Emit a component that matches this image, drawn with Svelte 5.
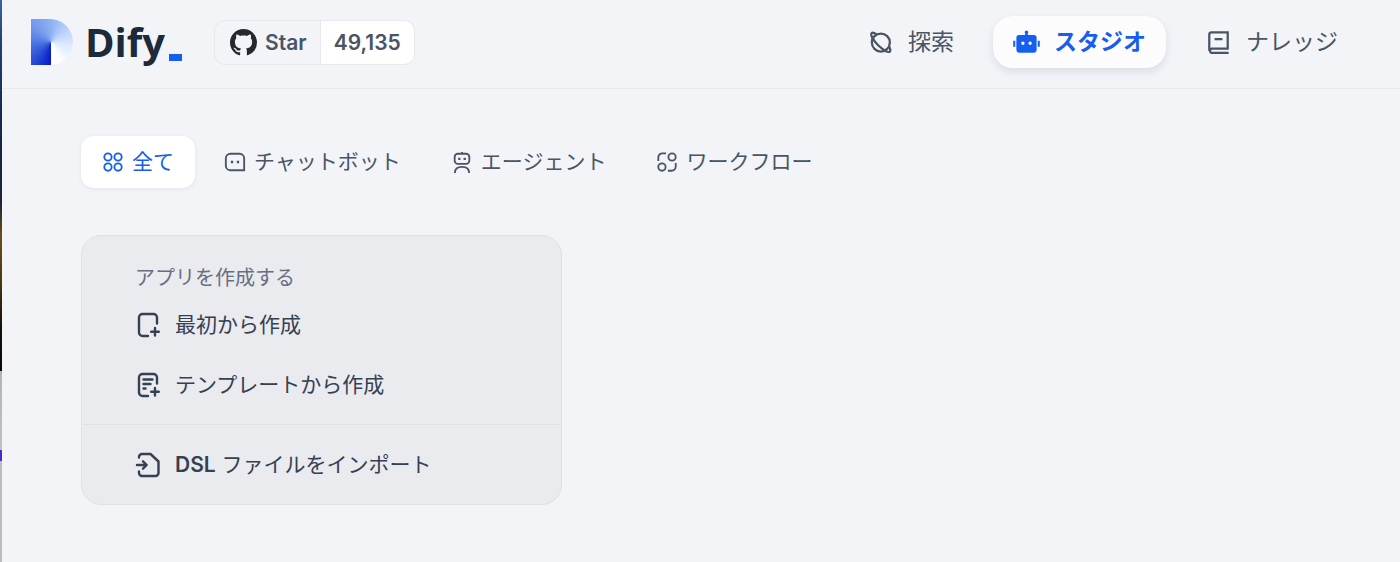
<script lang="ts">
	type IconName =
		| 'planet'
		| 'robot'
		| 'book'
		| 'apps'
		| 'message'
		| 'agent'
		| 'workflow'
		| 'file'
		| 'template'
		| 'import';

	interface Item {
		label: string;
		icon: IconName;
	}

	const navItems: Item[] = [
		{ label: '探索', icon: 'planet' },
		{ label: 'スタジオ', icon: 'robot' },
		{ label: 'ナレッジ', icon: 'book' }
	];

	const tabs: Item[] = [
		{ label: '全て', icon: 'apps' },
		{ label: 'チャットボット', icon: 'message' },
		{ label: 'エージェント', icon: 'agent' },
		{ label: 'ワークフロー', icon: 'workflow' }
	];

	const createItems: Item[] = [
		{ label: '最初から作成', icon: 'file' },
		{ label: 'テンプレートから作成', icon: 'template' }
	];

	let activeNav = $state('スタジオ');
	let activeTab = $state('全て');
</script>

{#snippet icon(name: IconName)}
	<svg class="icon" viewBox="0 0 24 24" fill="none" stroke="currentColor" stroke-width="2" aria-hidden="true">
		{#if name === 'planet'}
			<circle cx="12.3" cy="12" r="8" />
			<path
				d="M8.5 4.9C6.4 3.3 4.8 2.9 4.1 3.7C2.8 5.1 5.5 10 9.7 14.3C13.9 18.5 18.8 21.4 20.3 20.1C21.2 19.2 20.8 17.7 19.5 15.5M4.1 3.7C3.4 4.5 3.9 6.5 5.4 8.9"
				stroke-linejoin="round"
			/>
		{:else if name === 'robot'}
			<path
				fill="currentColor"
				stroke="none"
				fill-rule="evenodd"
				d="M10.8 5.3V3.8A1.5 1.5 0 1 1 13.2 3.8V5.3H18.5A2.5 2.5 0 0 1 21 7.8V18.5A2.5 2.5 0 0 1 18.5 21H5.5A2.5 2.5 0 0 1 3 18.5V7.8A2.5 2.5 0 0 1 5.5 5.3ZM8.8 11.2A1.5 1.5 0 1 0 8.8 14.2A1.5 1.5 0 0 0 8.8 11.2ZM15.2 11.2A1.5 1.5 0 1 0 15.2 14.2A1.5 1.5 0 0 0 15.2 11.2ZM0.2 10.5H2V15.7H0.2ZM22 10.5H23.8V15.7H22Z"
			/>
		{:else if name === 'book'}
			<path d="M21 17.5H5.8A2 2 0 0 0 5.8 21.3H21M3.8 19.4V5A2 2 0 0 1 5.8 3H20.2V17.5M8.5 9H15.5" />
		{:else if name === 'apps'}
			<circle cx="6.5" cy="6.5" r="4" />
			<circle cx="17.5" cy="6.5" r="4" />
			<circle cx="6.5" cy="17.5" r="4" />
			<circle cx="17.5" cy="17.5" r="4" />
		{:else if name === 'message'}
			<path d="M7 3H17A5 5 0 0 1 22 8V21H7A5 5 0 0 1 2 16V8A5 5 0 0 1 7 3Z" />
			<path d="M7.5 12H10M14 12H16.5" stroke-width="2.5" />
		{:else if name === 'agent'}
			<rect x="4" y="3" width="16" height="11" rx="3.5" />
			<path d="M12 1V3M4.2 24C4.2 19.5 7.5 17.3 12 17.3S19.8 19.5 19.8 24" />
			<path d="M7.8 8.5H10.3M13.7 8.5H16.2" stroke-width="2.5" />
		{:else if name === 'workflow'}
			<circle cx="17.5" cy="6.5" r="4" />
			<circle cx="6.5" cy="17.5" r="4" />
			<path d="M2.5 11V7A4.5 4.5 0 0 1 7 2.5H11M21.5 13V17A4.5 4.5 0 0 1 17 21.5H13" />
		{:else if name === 'file'}
			<path
				d="M21 10.5V4.5A3.5 3.5 0 0 0 17.5 1H6.5A3.5 3.5 0 0 0 3 4.5V19.5A3.5 3.5 0 0 0 6.5 23H12M19 15V22.5M15.2 18.7H22.8"
				stroke-linecap="round"
			/>
		{:else if name === 'template'}
			<path
				d="M21 10.5V4.5A3.5 3.5 0 0 0 17.5 1H6.5A3.5 3.5 0 0 0 3 4.5V19.5A3.5 3.5 0 0 0 6.5 23H12M19 15V22.5M15.2 18.7H22.8M7.5 6.5H16.5M7.5 11H14.5M7.5 15.5H9.5"
				stroke-linecap="round"
			/>
		{:else}
			<path
				d="M3 4.5V4A3 3 0 0 1 6 1H14.5L22.5 8.5V20A3 3 0 0 1 19.5 23H6A3 3 0 0 1 3 20V18.5M1 12H10.5M7 8.3L10.7 12L7 15.7"
				stroke-linecap="round"
				stroke-linejoin="round"
			/>
		{/if}
	</svg>
{/snippet}

<div class="shell">
	<div class="edge"></div>
	<div class="page">
		<header class="header">
			<a class="logo" href="/" aria-label="Dify">
				<span class="logo-mark"></span>
				<span class="logo-text">Dify</span>
				<span class="logo-cursor"></span>
			</a>

			<a class="github" href="/github">
				<span class="github-star">
					<svg class="github-icon" viewBox="0 0 16 16" aria-hidden="true">
						<path
							fill="currentColor"
							d="M8 0C3.58 0 0 3.58 0 8c0 3.54 2.29 6.53 5.47 7.59.4.07.55-.17.55-.38 0-.19-.01-.82-.01-1.49-2.01.37-2.53-.49-2.69-.94-.09-.23-.48-.94-.82-1.13-.28-.15-.68-.52-.01-.53.63-.01 1.08.58 1.23.82.72 1.21 1.87.87 2.33.66.07-.52.28-.87.51-1.07-1.78-.2-3.64-.89-3.64-3.95 0-.87.31-1.59.82-2.15-.08-.2-.36-1.02.08-2.12 0 0 .67-.21 2.2.82.64-.18 1.32-.27 2-.27s1.36.09 2 .27c1.53-1.04 2.2-.82 2.2-.82.44 1.1.16 1.92.08 2.12.51.56.82 1.27.82 2.15 0 3.07-1.87 3.75-3.65 3.95.29.25.54.73.54 1.48 0 1.07-.01 1.93-.01 2.2 0 .21.15.46.55.38A8.01 8.01 0 0 0 16 8c0-4.42-3.58-8-8-8Z"
						/>
					</svg>
					Star
				</span>
				<span class="github-count">49,135</span>
			</a>

			<nav class="nav">
				{#each navItems as item}
					<a
						class="nav-item"
						class:active={activeNav === item.label}
						href="#{item.icon}"
						onclick={() => (activeNav = item.label)}
					>
						{@render icon(item.icon)}
						<span>{item.label}</span>
					</a>
				{/each}
			</nav>
		</header>

		<main class="main">
			<div class="tabs">
				{#each tabs as tab}
					<button
						class="tab"
						class:active={activeTab === tab.label}
						type="button"
						onclick={() => (activeTab = tab.label)}
					>
						{@render icon(tab.icon)}
						<span>{tab.label}</span>
					</button>
				{/each}
			</div>

			<section class="card">
				<div class="card-group">
					<h2 class="card-title">アプリを作成する</h2>
					{#each createItems as item}
						<button class="card-item" type="button">
							{@render icon(item.icon)}
							<span>{item.label}</span>
						</button>
					{/each}
				</div>
				<div class="card-footer">
					<button class="card-item" type="button">
						{@render icon('import')}
						<span><b>DSL</b> ファイルをインポート</span>
					</button>
				</div>
			</section>
		</main>
	</div>
</div>

<style>
	:global(body) {
		background: #f2f4f8;
	}

	.shell {
		display: grid;
		grid-template-columns: 2px minmax(0, 1fr);
		min-height: 100vh;
		font-family: Inter, 'Noto Sans CJK JP', sans-serif;
		color: #495464;
	}

	/* sliver of the desktop behind the window */
	.edge {
		background: linear-gradient(
			#3b62a0 0%,
			#20406f 8%,
			#14284a 22%,
			#1b2536 36%,
			#6a5018 42%,
			#4a3813 50%,
			#15110c 58%,
			#080808 66%,
			#b4b4b4 66%,
			#c0c0c0 80%,
			#4a2bc8 80%,
			#4a2bc8 82%,
			#bcbcbc 82%
		);
	}

	.header {
		display: flex;
		align-items: center;
		padding: 16px 42px 20px 29px;
		border-bottom: 1px solid #e7e9ee;
	}

	a {
		color: inherit;
		text-decoration: none;
	}

	button {
		border: 0;
		background: none;
		font: inherit;
		color: inherit;
		cursor: pointer;
	}

	.icon {
		flex: none;
	}

	.logo {
		display: flex;
		align-items: center;
		height: 46px;
	}

	.logo-mark {
		width: 42px;
		height: 46px;
		border-radius: 0 23px 23px 0;
		background: conic-gradient(
			from 180deg at 48% 50%,
			#0618c4 0%,
			#2a4fd6 12%,
			#5078e2 25%,
			#7499ec 37%,
			#8fb1f4 50%,
			#b3cdfa 62%,
			#d6e5fe 75%,
			#eef4ff 86%,
			#ffffff 94%
		);
	}

	.logo-text {
		margin-left: 12px;
		font-family: 'Open Sans', sans-serif;
		font-size: 40px;
		font-weight: 700;
		line-height: 46px;
		color: #1c2a3a;
	}

	.logo-cursor {
		align-self: flex-end;
		width: 13px;
		height: 7px;
		margin: 0 0 4px 4px;
		background: #155eef;
	}

	.github {
		display: flex;
		margin-left: 32px;
		border: 1px solid #e7e9ee;
		border-radius: 11px;
		overflow: hidden;
		font-size: 21px;
		font-weight: 600;
		line-height: 43px;
	}

	.github-star {
		display: flex;
		align-items: center;
		gap: 8px;
		padding: 0 13px 0 15px;
		border-right: 1px solid #e7e9ee;
	}

	.github-icon {
		width: 27px;
		height: 27px;
		color: #24292f;
	}

	.github-count {
		padding: 0 13px;
		background: #fff;
	}

	.nav {
		display: flex;
		gap: 19px;
		margin-left: auto;
	}

	.nav-item {
		display: flex;
		align-items: center;
		gap: 14px;
		height: 52px;
		padding: 0 20px;
		border-radius: 20px;
		font-size: 23px;
		line-height: 32px;
		white-space: nowrap;
	}

	.nav-item .icon {
		width: 27px;
		height: 27px;
	}

	.nav-item.active {
		background: #fcfcfd;
		box-shadow: 0 4px 10px rgba(16, 24, 40, 0.1);
		font-weight: 700;
		color: #155eef;
	}

	.main {
		padding: 47px 80px 56px 79px;
	}

	.tabs {
		display: flex;
		flex-wrap: wrap;
		gap: 8px;
	}

	.tab {
		display: flex;
		align-items: center;
		gap: 8px;
		height: 52px;
		padding: 0 21px;
		border-radius: 13px;
		font-size: 21px;
		line-height: 30px;
		white-space: nowrap;
	}

	.tab .icon {
		width: 22px;
		height: 22px;
	}

	.tab.active {
		background: #fff;
		box-shadow: 0 1px 4px rgba(16, 24, 40, 0.08);
		color: #155eef;
	}

	.card {
		box-sizing: border-box;
		max-width: 481px;
		margin-top: 47px;
		border: 1px solid #dfe1e6;
		border-radius: 20px;
		background: #eaebef;
		color: #354052;
	}

	.card-group {
		padding: 24px 16px 15px;
	}

	.card-title {
		margin: 0 0 5px;
		padding: 0 37px;
		font-size: 20px;
		font-weight: 400;
		line-height: 36px;
		color: #676f83;
	}

	.card-item {
		display: flex;
		align-items: center;
		gap: 15px;
		width: 100%;
		height: 48px;
		padding: 0 38px;
		border-radius: 13px;
		font-size: 21px;
		line-height: 30px;
		text-align: left;
	}

	.card-item + .card-item {
		margin-top: 12px;
	}

	.card-item b {
		font-weight: 600;
	}

	.card-item .icon {
		width: 24px;
		height: 24px;
		stroke-width: 2.4;
		overflow: visible;
	}

	.card-footer {
		padding: 16px 16px 15px;
		border-top: 1px solid #dfe1e6;
	}
</style>
